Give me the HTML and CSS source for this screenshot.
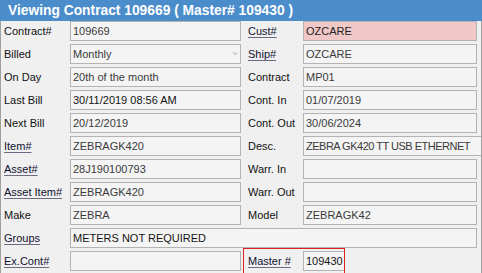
FILE: index.html
```html
<!DOCTYPE html>
<html lang="en">
<head>
    <meta charset="UTF-8">
    <title>Viewing Contract</title>
    <link rel="stylesheet" href="styles.css">
</head>
<body>
<div class="window">
    <div class="title">Viewing Contract 109669 ( Master# 109430 )</div>

    <div class="form">
        <span class="lbl">Contract#</span>
        <div class="field">109669</div>
        <span class="lbl right link">Cust#</span>
        <div class="field pink">OZCARE</div>

        <span class="lbl">Billed</span>
        <div class="field select">Monthly<span class="chev">&#8964;</span></div>
        <span class="lbl right link">Ship#</span>
        <div class="field">OZCARE</div>

        <span class="lbl">On Day</span>
        <div class="field">20th of the month</div>
        <span class="lbl right">Contract</span>
        <div class="field">MP01</div>

        <span class="lbl">Last Bill</span>
        <div class="field dark">30/11/2019 08:56 AM</div>
        <span class="lbl right">Cont. In</span>
        <div class="field">01/07/2019</div>

        <span class="lbl">Next Bill</span>
        <div class="field">20/12/2019</div>
        <span class="lbl right">Cont. Out</span>
        <div class="field">30/06/2024</div>

        <span class="lbl link">Item#</span>
        <div class="field">ZEBRAGK420</div>
        <span class="lbl right">Desc.</span>
        <div class="field wide">ZEBRA GK420 TT USB ETHERNET</div>

        <span class="lbl link">Asset#</span>
        <div class="field">28J190100793</div>
        <span class="lbl right">Warr. In</span>
        <div class="field"></div>

        <span class="lbl link">Asset Item#</span>
        <div class="field">ZEBRAGK420</div>
        <span class="lbl right">Warr. Out</span>
        <div class="field"></div>

        <span class="lbl">Make</span>
        <div class="field">ZEBRA</div>
        <span class="lbl right">Model</span>
        <div class="field">ZEBRAGK42</div>

        <span class="lbl link">Groups</span>
        <div class="field dark span3">METERS NOT REQUIRED</div>

        <span class="lbl link">Ex.Cont#</span>
        <div class="field"></div>
        <div class="master">
            <span class="lbl link">Master #</span>
            <div class="field dark">109430</div>
        </div>
    </div>
</div>
</body>
</html>
```

FILE: styles.css
```css
html, body {
    margin: 0;
    height: 100%;
    overflow: hidden;
    background: #f0f0f0;
    font-family: "Liberation Sans", Arial, sans-serif;
}

.window {
    width: 482px;
    height: 273px;
    box-sizing: border-box;
    overflow: hidden;
    background: #f0f0f0;
}

.title {
    height: 21px;
    line-height: 21px;
    padding-left: 8px;
    background: #4b8ccb;
    color: #fff;
    font-weight: bold;
    font-size: 13.8px;
    white-space: nowrap;
}

.form {
    display: grid;
    grid-template-columns: 66px 171px 62px 174px;
    grid-auto-rows: 20px;
    row-gap: 3px;
    padding-left: 3px;
    height: 252px;
    border-left: 1px solid #a0a0a0;
    border-right: 1px solid #a0a0a0;
    overflow: hidden;
}

.lbl {
    font-size: 11px;
    color: #111;
    line-height: 20px;
    white-space: nowrap;
}

.lbl.right {
    padding-left: 7px;
}

.link {
    color: #101030;
    text-decoration: underline;
    text-decoration-color: #6a6a80;
    text-underline-offset: 2px;
}

.field {
    box-sizing: border-box;
    height: 20px;
    border: 1px solid #b3b3b3;
    background: #f4f4f4;
    font-size: 11px;
    line-height: 18px;
    padding-left: 2px;
    color: #3a3a3a;
    white-space: nowrap;
    overflow: hidden;
}

.field.pink {
    background: #f1c8c8;
    color: #222;
}

.field.dark {
    color: #141414;
}

.field.wide {
    width: 184px;
    letter-spacing: -0.5px;
}

.field.span3 {
    grid-column: 2 / 5;
}

.select {
    display: flex;
    justify-content: space-between;
    padding-right: 0;
}

.chev {
    color: #c4c4c4;
    font-size: 12px;
    line-height: 12px;
}

.master {
    grid-column: 3 / 5;
    display: flex;
    align-items: flex-start;
    width: 102px;
    height: 26px;
    margin: -3px 0 0 2px;
    padding: 2px 0 0 4px;
    box-sizing: border-box;
    border: 1px solid #e02020;
}

.master .lbl {
    width: 55px;
    flex-shrink: 0;
}

.master .field {
    width: 43px;
    border-right: none;
}
```
